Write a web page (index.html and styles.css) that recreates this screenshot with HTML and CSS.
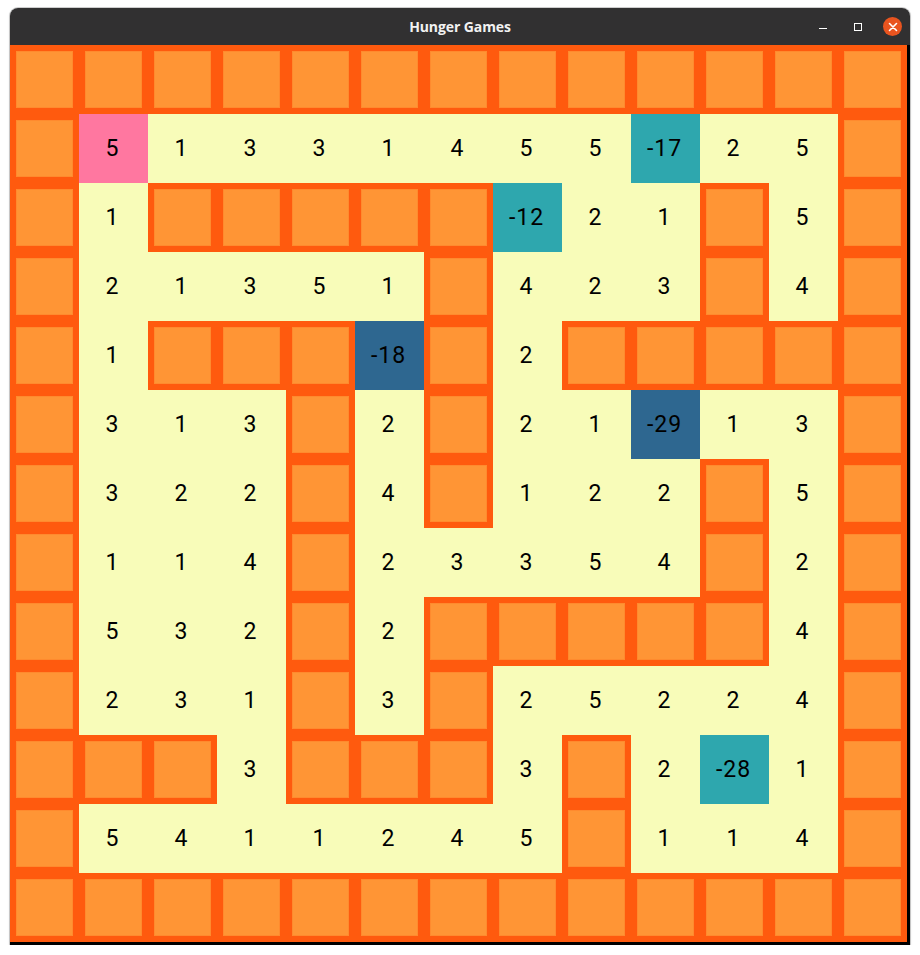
FILE: index.html
```html
<!DOCTYPE html>
<html lang="en">
<head>
    <meta charset="UTF-8">
    <meta name="viewport" content="width=device-width, initial-scale=1.0">
    <title>Hunger Games</title>
    <link rel="stylesheet" href="styles.css">
</head>
<body>
    <div class="window">
        <div class="titlebar">
            <span class="title">Hunger Games</span>
            <div class="controls">
                <span class="ctrl min"></span>
                <span class="ctrl max"></span>
                <span class="ctrl close">
                    <svg width="10" height="10" viewBox="0 0 10 10">
                        <path d="M1.5 1.5 L8.5 8.5 M8.5 1.5 L1.5 8.5" stroke="#fff" stroke-width="1.6" stroke-linecap="round"/>
                    </svg>
                </span>
            </div>
        </div>
        <div class="content">
            <div id="board" class="board"></div>
        </div>
    </div>

    <script>
        // W = wall, S = start, t = teal, b = blue
        let maze = [
            'W W W W W W W W W W W W W',
            'W S5 1 3 3 1 4 5 5 t-17 2 5 W',
            'W 1 W W W W W t-12 2 1 W 5 W',
            'W 2 1 3 5 1 W 4 2 3 W 4 W',
            'W 1 W W W b-18 W 2 W W W W W',
            'W 3 1 3 W 2 W 2 1 b-29 1 3 W',
            'W 3 2 2 W 4 W 1 2 2 W 5 W',
            'W 1 1 4 W 2 3 3 5 4 W 2 W',
            'W 5 3 2 W 2 W W W W W 4 W',
            'W 2 3 1 W 3 W 2 5 2 2 4 W',
            'W W W 3 W W W 3 W 2 t-28 1 W',
            'W 5 4 1 1 2 4 5 W 1 1 4 W',
            'W W W W W W W W W W W W W'
        ];

        let board = document.getElementById('board');

        maze.forEach(function (row) {
            row.split(' ').forEach(function (v) {
                let cell = document.createElement('div');
                cell.className = 'cell';
                if (v === 'W') {
                    cell.classList.add('wall');
                } else {
                    let kind = v[0];
                    if (kind === 'S') { cell.classList.add('start'); v = v.slice(1); }
                    else if (kind === 't') { cell.classList.add('trap'); v = v.slice(1); }
                    else if (kind === 'b') { cell.classList.add('deep'); v = v.slice(1); }
                    cell.textContent = v;
                }
                board.appendChild(cell);
            });
        });
    </script>
</body>
</html>
```

FILE: styles.css
```css
body{
    margin: 0;
    padding: 0;
    background-color: #ffffff;
}
.window{
    width: 900px;
    margin: 8px 0 0 10px;
    border-radius: 8px 8px 0 0;
    box-shadow: 0 0 0 1px rgba(0, 0, 0, 0.18), 0 1px 3px rgba(0, 0, 0, 0.15);
    overflow: hidden;
}
.titlebar{
    height: 37px;
    background-color: #313031;
    display: flex;
    align-items: center;
    justify-content: center;
    position: relative;
}
.title{
    color: #f2f2f2;
    font-family: "Open Sans", "DejaVu Sans", sans-serif;
    font-weight: 700;
    font-size: 14px;
    letter-spacing: -0.1px;
}
.controls{
    position: absolute;
    right: 0;
    top: 0;
    height: 37px;
    display: flex;
    align-items: center;
}
.ctrl{
    display: flex;
    align-items: center;
    justify-content: center;
    box-sizing: border-box;
}
.min{
    width: 8px;
    height: 1px;
    background-color: #ffffff;
    margin-top: 4px;
    margin-right: 27px;
}
.max{
    width: 8px;
    height: 8px;
    border: 1px solid #ffffff;
    margin-top: 0;
    margin-right: 21px;
}
.close{
    width: 19px;
    height: 19px;
    border-radius: 50%;
    background-color: #e9541f;
    margin-right: 8px;
}
.content{
    background-color: #000;
    padding: 0 3px 3px 0;
}
.board{
    display: grid;
    grid-template-columns: repeat(13, 69px);
    grid-template-rows: repeat(13, 69px);
}
.cell{
    box-sizing: border-box;
    background-color: #f8fcb9;
    display: flex;
    align-items: center;
    justify-content: center;
    padding-right: 2px;
    font-family: Roboto, "Liberation Sans", sans-serif;
    font-size: 23px;
    letter-spacing: 1px;
    color: #000;
}
.wall{
    background-color: #ff9535;
    border: 6px solid #ff5a0e;
    padding: 0;
    box-shadow: inset 0 0 0 1px #ff8a2e;
}
.start{
    background-color: #ff77a0;
}
.trap{
    background-color: #2ea7ae;
}
.deep{
    background-color: #2e6790;
}
```
